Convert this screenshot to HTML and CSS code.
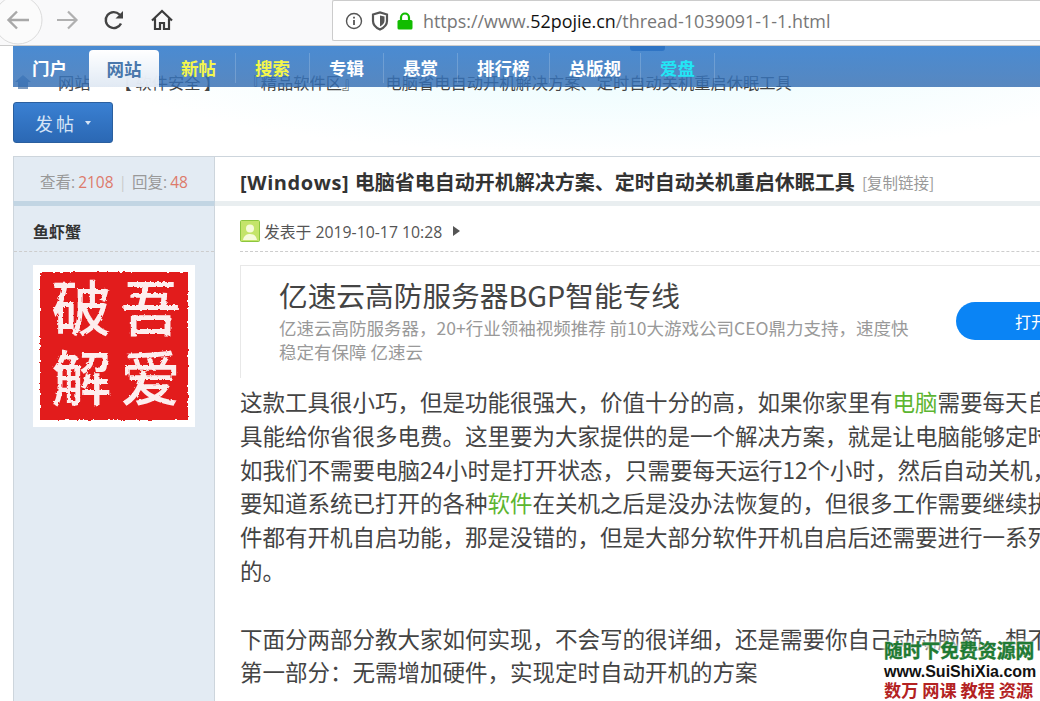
FILE: index.html
```html
<!DOCTYPE html>
<html lang="zh-CN">
<head>
    <meta charset="UTF-8">
    <title>电脑省电自动开机解决方案、定时自动关机重启休眠工具</title>
    <link rel="stylesheet" href="styles.css">
</head>
<body>
    <div class="toolbar">
        <div class="tool-buttons">
            <svg class="back-btn" width="48" height="48" viewBox="0 0 48 48">
                <circle cx="18" cy="20" r="24" fill="#fbfbfb" stroke="#dcdcdc"/>
                <path d="M29 20H9M17 11.500L8.500 20L17 28.500" fill="none" stroke="#a8a8a8" stroke-width="2.400"/>
            </svg>
            <svg class="fwd-btn" width="24" height="24" viewBox="0 0 24 24">
                <path d="M2 12H21M13 3.500L21.500 12L13 20.500" fill="none" stroke="#b0b0b0" stroke-width="2.200"/>
            </svg>
            <svg class="reload-btn" width="24" height="24" viewBox="0 0 24 24">
                <path d="M19 15.500A8 8 0 1 1 17.500 6.500L19.500 8.500" fill="none" stroke="#444" stroke-width="2.400"/>
                <path d="M21 3V10.500H13.500Z" fill="#444"/>
            </svg>
            <svg class="home-btn" width="24" height="24" viewBox="0 0 24 24">
                <path d="M2 12.500L12 3L22 12.500M5 10.500V21H10V15H14V21H19V10.500" fill="none" stroke="#3c3c3c" stroke-width="2.200"/>
            </svg>
        </div>
        <div class="url-bar">
            <svg width="18" height="18" viewBox="0 0 18 18">
                <circle cx="9" cy="9" r="7.500" fill="none" stroke="#555" stroke-width="1.400"/>
                <path d="M9 8V13M9 4.800V6.400" stroke="#555" stroke-width="1.800"/>
            </svg>
            <svg width="18" height="20" viewBox="0 0 18 20">
                <path d="M2 3.500L9 1.500L16 3.500V10C16 14 12.500 17 9 18.500C5.500 17 2 14 2 10Z" fill="none" stroke="#555" stroke-width="2.200"/>
                <path d="M9 4.500L13.500 5.500V10C13.500 12.500 11 14.500 9 15.500Z" fill="#555"/>
            </svg>
            <svg width="16" height="18" viewBox="0 0 16 18">
                <path d="M4 8V5.500A4 4 0 0 1 12 5.500V8" fill="none" stroke="#12bc00" stroke-width="2.200"/>
                <rect x="0.500" y="8" width="15" height="9.500" rx="1.500" fill="#12bc00"/>
            </svg>
            <span class="url-text">https://www.<b>52pojie.cn</b>/thread-1039091-1-1.html</span>
        </div>
    </div>

    <div class="nav">
        <span class="nav-mark"></span>
        <a class="nav-item nav-first">门户</a>
        <a class="nav-item nav-current">网站</a>
        <a class="nav-item nav-yellow nav-after">新帖</a>
        <a class="nav-item nav-yellow">搜索</a>
        <a class="nav-item">专辑</a>
        <a class="nav-item">悬赏</a>
        <a class="nav-item">排行榜</a>
        <a class="nav-item">总版规</a>
        <a class="nav-item nav-cyan">爱盘</a>
    </div>

    <div class="top-area">
        <div class="crumbs">
            <svg class="crumb-home" width="16" height="14" viewBox="0 0 16 14">
                <path d="M0 7L8 0L16 7H13V14H3V7Z" fill="#7f9cc0"/>
            </svg>
            <span class="crumb-first">网站</span>
            <span class="crumb-second">【 软件安全 】</span>
            <span class="crumb-third">『精品软件区』</span>
            <span class="crumb-last">电脑省电自动开机解决方案、定时自动关机重启休眠工具</span>
        </div>
        <button class="post-btn">发帖<span class="caret"></span></button>
    </div>

    <div class="post">
        <div class="side-stats">
            查看: <em>2108</em><span class="pipe">|</span>回复: <em>48</em>
        </div>
        <div class="title-row">
            <h1><span class="title-tag">[Windows]</span> 电脑省电自动开机解决方案、定时自动关机重启休眠工具</h1>
            <span class="copy-link">[复制链接]</span>
        </div>

        <div class="side">
            <div class="author">鱼虾蟹</div>
            <div class="avatar">
                <div class="seal">
                    <span>破</span><span>吾</span><span>解</span><span>爱</span>
                </div>
            </div>
        </div>

        <div class="content">
            <div class="post-meta">
                <svg width="20" height="22" viewBox="0 0 20 22">
                    <rect x="0.500" y="0.500" width="19" height="21" rx="1" fill="#c4e46a" stroke="#8cc63f"/>
                    <circle cx="10" cy="8.500" r="4" fill="#f6fbdc"/>
                    <path d="M3 20C4 15 7 14 10 14C13 14 16 15 17 20Z" fill="#f6fbdc"/>
                </svg>
                <span>发表于 2019-10-17 10:28</span>
                <i class="meta-arrow"></i>
            </div>

            <div class="ad">
                <div class="ad-text">
                    <div class="ad-title">亿速云高防服务器BGP智能专线</div>
                    <div class="ad-desc">亿速云高防服务器，20+行业领袖视频推荐 前10大游戏公司CEO鼎力支持，速度快<br>稳定有保障 亿速云</div>
                </div>
                <div class="ad-btn">打开</div>
            </div>

            <div class="article">
                <p>这款工具很小巧，但是功能很强大，价值十分的高，如果你家里有<a>电脑</a>需要每天自</p>
                <p>具能给你省很多电费。这里要为大家提供的是一个解决方案，就是让电脑能够定时</p>
                <p>如我们不需要电脑24小时是打开状态，只需要每天运行12个小时，然后自动关机，</p>
                <p>要知道系统已打开的各种<a>软件</a>在关机之后是没办法恢复的，但很多工作需要继续执</p>
                <p>件都有开机自启功能，那是没错的，但是大部分软件开机自启后还需要进行一系列</p>
                <p>的。</p>
                <p class="gap">下面分两部分教大家如何实现，不会写的很详细，还是需要你自己动动脑筋，想不</p>
                <p>第一部分：无需增加硬件，实现定时自动开机的方案</p>
            </div>
        </div>
    </div>

    <div class="watermark">
        <div class="wm-site">随时下免费资源网</div>
        <div class="wm-url">www.SuiShiXia.com</div>
        <div class="wm-tag">数万 网课 教程 资源</div>
    </div>

    <svg class="defs" width="0" height="0">
        <filter id="rough">
            <feTurbulence type="fractalNoise" baseFrequency="0.3" numOctaves="2" seed="4"/>
            <feDisplacementMap in="SourceGraphic" scale="3"/>
        </filter>
    </svg>
</body>
</html>
```

FILE: styles.css
```css
html, body {
    margin: 0;
    height: 701px;
    overflow: hidden;
}
body {
    position: relative;
    width: 1040px;
    background-color: white;
    font-family: "Noto Sans CJK SC", "Noto Sans", sans-serif;
    color: #444;
}

/* browser toolbar */
.toolbar {
    display: flex;
    height: 45px;
    background-color: #f9f9fa;
    border-bottom: 1px solid #ccc;
    overflow: hidden;
}
.tool-buttons {
    display: flex;
    align-items: flex-start;
    width: 332px;
    flex: none;
}
.back-btn {
    flex: none;
}
.fwd-btn {
    margin: 8px 0 0 7px;
}
.reload-btn {
    margin: 8px 0 0 23px;
}
.home-btn {
    margin: 8px 0 0 24px;
}
.url-bar {
    display: flex;
    align-items: center;
    gap: 8px;
    flex: 1;
    height: 39px;
    padding-left: 12px;
    background-color: white;
    border: 1px solid #ccc;
    border-right: none;
    border-radius: 2px 0 0 2px;
}
.url-text {
    margin-left: 2px;
    font-family: "Open Sans", sans-serif;
    font-size: 17.900px;
    color: #777;
}
.url-text b {
    font-weight: normal;
    color: #111;
}

/* fixed nav lying over the breadcrumb */
.nav {
    position: absolute;
    top: 46px;
    left: 13px;
    right: 0;
    display: flex;
    height: 41px;
    background: linear-gradient(#4a8bd2, rgba(48, 106, 176, 0.8));
}
.nav-mark {
    position: absolute;
    top: 0;
    left: 617px;
    width: 35px;
    height: 5px;
    background-color: #2f74c4;
    border-radius: 0 0 3px 3px;
}
.nav-item {
    display: flex;
    align-items: center;
    height: 30px;
    margin-top: 7px;
    padding: 0 19px;
    font-size: 17.500px;
    font-weight: bold;
    line-height: 30px;
    color: white;
    border-right: 1px solid rgba(255, 255, 255, 0.18);
}
.nav-first {
    border-right: none;
}
.nav-current {
    height: 37px;
    margin: 4px 0 0 3px;
    padding: 0 17.500px;
    color: #4a78ac;
    background: linear-gradient(#fff, rgba(255, 255, 255, 0.82));
    border-right: none;
    border-radius: 4px 4px 0 0;
}
.nav-after {
    margin-left: 3px;
}
.nav-yellow {
    color: #f4f74a;
}
.nav-cyan {
    color: #22e6f5;
}

/* breadcrumb and post button */
.top-area {
    height: 110px;
    padding: 25px 0 0 13px;
    box-sizing: border-box;
    background: radial-gradient(ellipse 560px 110px at 60% 0, #e6fbfe, rgba(255, 255, 255, 0));
}
.crumbs {
    display: flex;
    align-items: center;
    height: 22px;
    font-size: 16.250px;
    line-height: 22px;
    white-space: nowrap;
    color: #444;
}
.crumb-home {
    margin: 0 0 0 2px;
}
.crumb-first {
    margin-left: 27px;
}
.crumb-second {
    margin-left: 25px;
    width: 110px;
}
.crumb-third {
    margin-left: 19px;
    width: 110px;
}
.crumb-last {
    margin-left: 31px;
}
.post-btn {
    display: flex;
    align-items: center;
    justify-content: center;
    width: 100px;
    height: 41px;
    margin-top: 9px;
    padding: 0;
    font-family: inherit;
    font-size: 18px;
    letter-spacing: 3px;
    color: #d5e4f6;
    background: linear-gradient(#3a80d2, #2b68b4);
    border: 1px solid #2a5f9f;
    border-radius: 3px;
}
.caret {
    width: 0;
    height: 0;
    margin-left: 8px;
    border-top: 4px solid #d5e4f6;
    border-left: 3.500px solid transparent;
    border-right: 3.500px solid transparent;
}

/* post table */
.post {
    display: grid;
    grid-template-columns: 202px 1100px;
    grid-template-rows: 44px auto;
    margin-left: 13px;
    border-top: 1px solid #cdd5dc;
}
.side-stats {
    display: flex;
    align-items: center;
    justify-content: center;
    gap: 3px;
    padding-top: 5px;
    font-family: "Open Sans", "Noto Sans CJK SC", sans-serif;
    font-size: 15.500px;
    color: #999;
    background-color: #e3ebf3;
    border-left: 1px solid #cdd5dc;
    border-right: 1px solid #cdd5dc;
    box-sizing: border-box;
}
.side-stats em {
    font-style: normal;
    color: #dd7a6b;
}
.pipe {
    margin: 0 2px;
    color: #ccc;
}
.title-row {
    display: flex;
    align-items: center;
    gap: 7px;
    padding: 5px 0 0 25px;
}
.title-row h1 {
    margin: 0;
    font-size: 20px;
    font-weight: bold;
    color: #333;
}
.title-tag {
    margin-right: 1px;
    font-family: "Open Sans", sans-serif;
    letter-spacing: 0.600px;
}
.copy-link {
    font-size: 15.500px;
    color: #999;
}
.side {
    grid-column: 1;
    height: 500px;
    background-color: #e3ebf3;
    border-top: 5px solid #c2d5e3;
    border-left: 1px solid #cdd5dc;
    border-right: 1px solid #cdd5dc;
    box-sizing: border-box;
}
.author {
    height: 46px;
    margin-bottom: 13px;
    padding-left: 19px;
    font-size: 16px;
    font-weight: bold;
    line-height: 50px;
    color: #333;
    border-bottom: 1px dashed #cdcdcd;
    box-sizing: border-box;
}
.avatar {
    width: 162px;
    height: 162px;
    margin-left: 19px;
    padding: 7px;
    background-color: white;
    box-sizing: border-box;
}
.seal {
    display: grid;
    grid-template-columns: 1fr 1fr;
    grid-template-rows: 70px 70px;
    height: 148px;
    padding: 0 3px 0 7px;
    box-sizing: border-box;
    filter: url(#rough);
    background-color: #e21a1c;
    font-size: 60px;
    font-weight: 500;
    line-height: 66px;
    text-align: center;
    color: #fdeeee;
}
.content {
    grid-column: 2;
    padding-left: 25px;
    border-top: 5px solid #e9eef0;
}
.post-meta {
    display: flex;
    align-items: center;
    gap: 4px;
    width: 1100px;
    height: 46px;
    padding-top: 5px;
    font-family: "Open Sans", "Noto Sans CJK SC", sans-serif;
    font-size: 15.800px;
    color: #555;
    border-bottom: 1px dashed #cdcdcd;
    box-sizing: border-box;
}
.meta-arrow {
    margin-left: 7px;
    border-left: 7px solid #555;
    border-top: 5px solid transparent;
    border-bottom: 5px solid transparent;
}

/* ad box */
.ad {
    display: flex;
    align-items: flex-start;
    width: 1074px;
    height: 113px;
    margin-top: 13px;
    border-top: 1px solid #e8e8e8;
    border-left: 1px solid #e8e8e8;
    box-sizing: border-box;
}
.ad-text {
    width: 677px;
    padding: 10px 0 0 38px;
    flex: none;
}
.ad-title {
    font-size: 28.700px;
    line-height: 38px;
    color: #444;
    white-space: nowrap;
}
.ad-desc {
    margin-top: 2px;
    font-size: 17.500px;
    line-height: 23.500px;
    color: #999;
    white-space: nowrap;
}
.ad-btn {
    width: 160px;
    height: 38px;
    margin-top: 36px;
    padding-left: 59px;
    box-sizing: border-box;
    font-size: 16px;
    line-height: 38px;
    color: white;
    background-color: #0a84f5;
    border-radius: 19px;
}

/* article text */
.article {
    margin-top: 7px;
    font-size: 22.500px;
    line-height: 33.800px;
    color: #444;
}
.article p {
    margin: 0;
    white-space: nowrap;
}
.article a {
    color: #5cb531;
}
.article .gap {
    margin-top: 33.800px;
}

/* site watermark stamped on the screenshot */
.watermark {
    position: absolute;
    left: 884px;
    top: 638px;
    width: 156px;
    font-weight: bold;
    white-space: nowrap;
    text-shadow: 0 0 3px white, 0 0 4px white, 0 0 6px white;
}
.wm-site {
    font-size: 18.800px;
    line-height: 23px;
    color: #1f7a33;
    -webkit-text-stroke: 0.4px #1f7a33;
}
.wm-url {
    font-family: "Liberation Sans", sans-serif;
    font-size: 16px;
    line-height: 21px;
    color: #111;
}
.wm-tag {
    margin-top: -2px;
    font-size: 17.200px;
    line-height: 19px;
    color: #b32222;
}
.defs {
    position: absolute;
}
```
